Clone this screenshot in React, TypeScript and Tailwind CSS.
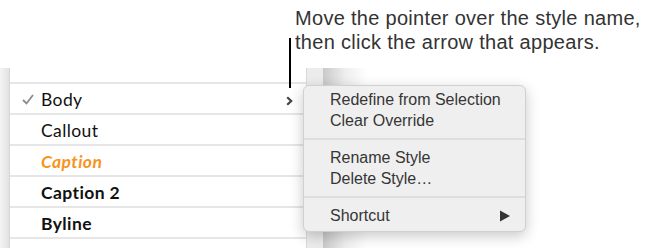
import React from 'react';

type StyleRow = {
    name: string;
    className: string;
    checked?: boolean;
    arrow?: boolean;
};

const rows: StyleRow[] = [
    { name: 'Body', className: 'font-normal text-[#111]', checked: true, arrow: true },
    { name: 'Callout', className: 'font-normal text-[#111]' },
    { name: 'Caption', className: 'font-bold italic text-[#f7941d]' },
    { name: 'Caption 2', className: 'font-bold text-[#111]' },
    { name: 'Byline', className: 'font-bold text-[#111]' },
];

function MenuItem({ label, submenu }: { label: string; submenu?: boolean }) {
    return (
        <div className="flex h-[21px] items-center justify-between pl-[26px] pr-[14px]">
            <span>{label}</span>
            {submenu && (
                <svg width="12" height="12" viewBox="0 0 12 12">
                    <polygon points="1,0.5 11,6 1,11.5" fill="#333" />
                </svg>
            )}
        </div>
    );
}

function Separator() {
    return <div className="my-[7px] h-[2px] bg-[#dedede]" />;
}

export default function App() {
    return (
        <div className="relative h-[248px] w-[656px] overflow-hidden bg-white">
            {/* Annotation */}
            <div className="h-[68px] pl-[295px] pt-[6px] font-['Liberation_Sans',Arial,sans-serif] text-[20px] leading-[24px] tracking-[0.3px] text-[#333]">
                <p>Move the pointer over the style name,</p>
                <p>then click the arrow that appears.</p>
            </div>

            {/* Styles pane */}
            <div className="flex h-[180px]">
                <div className="w-[10px] border-r border-[#d6d6d6] bg-gradient-to-r from-[#f4f4f4] to-[#e2e2e2]" />
                <div className="w-[296px] bg-white pt-[14px] font-['Lato','Noto_Sans',sans-serif] text-[17.5px] tracking-[0.4px]">
                    {rows.map((row) => (
                        <div
                            key={row.name}
                            className="relative flex h-[31px] items-center border-t-2 border-[#e6e6e6] pl-[31px] pt-[3px]"
                        >
                            {row.checked && (
                                <svg className="absolute left-[12px] top-[10px]" width="12" height="11" viewBox="0 0 12 11">
                                    <path d="M1 6 L4.5 9.5 L11 1" fill="none" stroke="#8a8a8a" strokeWidth="1.8" />
                                </svg>
                            )}
                            <span className={row.className}>{row.name}</span>
                            {row.arrow && (
                                <svg className="absolute right-[13px] top-[12px]" width="7" height="10" viewBox="0 0 7 10">
                                    <path d="M1.2 1.2 L5.2 5 L1.2 8.8" fill="none" stroke="#444" strokeWidth="2.2" />
                                </svg>
                            )}
                        </div>
                    ))}
                    <div className="h-[11px] border-t-2 border-[#e6e6e6]" />
                </div>
                <div className="w-[17px] border-l border-[#dadada] bg-[#ececec]" />
                <div className="w-[44px] bg-gradient-to-r from-[#c9c9c9] via-[#eeeeee] to-white" />
            </div>

            {/* Callout line */}
            <div className="absolute left-[289px] top-[38px] h-[50px] w-[2px] bg-black" />

            {/* Context menu */}
            <div className="absolute left-[303px] top-[85px] w-[223px] rounded-[6px] border border-[#d0d0d0] bg-[#efefef] pb-[5px] pt-[3px] font-['Liberation_Sans',Arial,sans-serif] text-[16px] text-[#363636] shadow-[0_4px_14px_rgba(0,0,0,0.22)]">
                <MenuItem label="Redefine from Selection" />
                <MenuItem label="Clear Override" />
                <Separator />
                <MenuItem label="Rename Style" />
                <MenuItem label="Delete Style…" />
                <Separator />
                <MenuItem label="Shortcut" submenu />
            </div>
        </div>
    );
}
